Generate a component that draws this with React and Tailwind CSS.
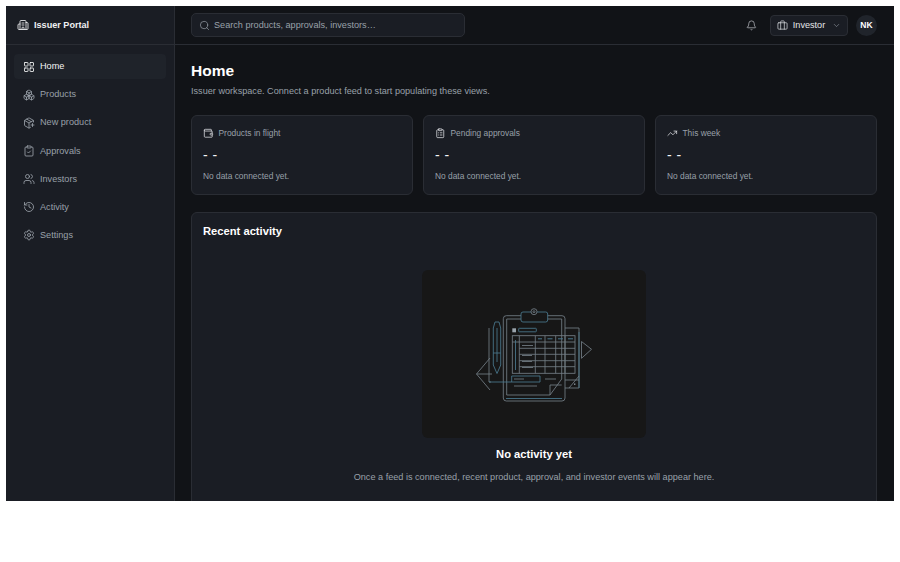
import React from "react";
import { Building2, LayoutGrid, Boxes, PackagePlus, ClipboardCheck, Users, History, Settings, Search, Bell, Briefcase, ChevronDown, Wallet, ClipboardList, TrendingUp } from "lucide-react";

const nav = [
  ["Home", LayoutGrid, true],
  ["Products", Boxes],
  ["New product", PackagePlus],
  ["Approvals", ClipboardCheck],
  ["Investors", Users],
  ["Activity", History],
  ["Settings", Settings],
];

const cards = [
  ["Products in flight", Wallet],
  ["Pending approvals", ClipboardList],
  ["This week", TrendingUp],
];

function Illustration() {
  const g = "#737d85";
  const t = "#4a7a8f";
  const vs = [97.3, 113.3, 123, 133.7, 143];
  const hs = [72, 78.3, 84.3, 90.7, 96.7];
  return (
    <svg viewBox="0 0 224 168" className="w-[224px] h-[168px]" fill="none" strokeWidth="0.85">
      <path d="M67 58V112H69" stroke={g} />
      <path d="M143 58H157V118H143" stroke={g} />
      <path d="M157 62V118" stroke={t} />
      <path d="M68 88L54.5 104L68 120M54.5 104H70" stroke={g} />
      <path d="M159.5 71.5L169.5 79.3L159.5 88.3V71.5" stroke={g} />
      <path d="M143 110H157M147 118L157 106" stroke={g} />
      <rect x="152" y="113.5" width="1.4" height="1.4" fill="#8a949c" />
      <rect x="81.3" y="45.7" width="61.7" height="85.3" rx="3" stroke={g} />
      <path d="M84.7 49H139.7V109L128 125H84.7V49Z" stroke={g} />
      <path d="M128 125V115H139.7" stroke={g} />
      <path d="M84 128.5H140" stroke={t} />
      <rect x="99" y="42" width="26.7" height="10" rx="2" fill="#171717" stroke={t} />
      <circle cx="112" cy="41.7" r="3" fill="#171717" stroke={g} />
      <circle cx="112" cy="41.7" r="1" stroke={g} />
      <rect x="90.3" y="58.3" width="3.7" height="4" fill="#9aa4ac" />
      <rect x="96.7" y="58.3" width="17.6" height="3.5" rx="0.6" stroke={t} />
      <rect x="90.3" y="65.7" width="62.7" height="37.6" stroke={g} />
      {vs.map((x) => (
        <path key={x} d={`M${x} 65.7V103.3`} stroke={g} />
      ))}
      {hs.map((y) => (
        <path key={y} d={`M97.3 ${y}H153`} stroke={g} />
      ))}
      <path d="M90.3 72H97.3" stroke={g} />
      <path d="M100 75.5H111M100 85.5H110M100 91.5H110M100 97.5H111" stroke="#737d85" />
      <path d="M116 68.8H120M125.5 68.8H130.5M136 68.8H141M146 68.8H151" stroke={t} strokeWidth="1" />
      <path d="M93.5 70V100" stroke={t} />
      <path d="M71.3 58L73 52H77L78.7 58V95L75 103.5L71.3 95V58ZM71.3 83H78.7M75 58V92" stroke={t} />
      <path d="M67 112H118V106H89.7V112" stroke={t} />
      <path d="M92 109H102M123 109H134M92 116H115" stroke="#737d85" />
    </svg>
  );
}

export default function App() {
  return (
    <div className="w-[900px] h-[562px] bg-white pt-[6px] pl-[6px] font-['Liberation_Sans',Arial,sans-serif]">
      <div className="w-[888px] h-[495px] overflow-hidden flex bg-[#111317]">
        <aside className="w-[169px] shrink-0 bg-[#1a1d24] border-r border-[#2a2d34]">
          <div className="h-[39px] flex items-center gap-[5px] pl-[11px] border-b border-[#2a2d34] text-[#f0f1f3]">
            <Building2 size={12} strokeWidth={1.7} />
            <span className="text-[9.1px] font-bold pt-[1px]">Issuer Portal</span>
          </div>
          <nav className="px-[8px] pt-[9px] flex flex-col gap-[3.17px]">
            {nav.map(([label, Icon, active]) => (
              <div
                key={label}
                className={`h-[25px] flex items-center gap-[5px] pl-[9px] rounded-[4px] text-[9.14px] ${active ? "bg-[#1f232a] text-[#f4f5f6]" : "text-[#99a0a9]"}`}
              >
                <Icon size={12} strokeWidth={1.7} />
                <span className="pt-[1px]">{label}</span>
              </div>
            ))}
          </nav>
        </aside>
        <div className="flex-1 min-w-0">
          <header className="h-[39px] flex items-center justify-between pl-[16px] pr-[17px] border-b border-[#2a2d34]">
            <div className="w-[274px] h-[24px] flex items-center gap-[4px] pl-[7px] rounded-[5px] bg-[#1a1d24] border border-[#2a2d34] text-[#99a0a9]">
              <Search size={11} strokeWidth={1.5} />
              <span className="text-[9.14px] pt-[1px]">Search products, approvals, investors…</span>
            </div>
            <div className="flex items-center">
              <Bell size={11} strokeWidth={1.5} className="text-[#c4c8cd]" />
              <div className="ml-[13px] w-[78px] h-[21px] flex items-center justify-center gap-[5px] rounded-[4px] bg-[#1a1d24] border border-[#2a2d34] text-[#e4e6e9]">
                <Briefcase size={11} strokeWidth={1.5} />
                <span className="text-[9.14px] pt-[1px]">Investor</span>
                <ChevronDown size={9} strokeWidth={1.5} className="ml-[2px] text-[#99a0a9]" />
              </div>
              <div className="ml-[8px] w-[21px] h-[21px] rounded-full bg-[#20242b] flex items-center justify-center text-[8.5px] font-bold text-white">NK</div>
            </div>
          </header>
          <main className="pl-[16px] pr-[17px] pt-[16px]">
            <h1 className="text-[15.5px] leading-[20px] font-bold text-white">Home</h1>
            <p className="mt-[4px] text-[9.14px] leading-[13px] text-[#99a0a9]">Issuer workspace. Connect a product feed to start populating these views.</p>
            <div className="mt-[17px] grid grid-cols-3 gap-[10px]">
              {cards.map(([label, Icon]) => (
                <div key={label} className="h-[80px] rounded-[6px] bg-[#1a1d24] border border-[#2a2d34] pl-[11px] pt-[11px]">
                  <div className="flex items-center gap-[5px] h-[13px] text-[#99a0a9]">
                    <Icon size={10.5} strokeWidth={1.7} className="text-[#e4e6e9]" />
                    <span className="text-[8.4px]">{label}</span>
                  </div>
                  <div className="mt-[5px] text-[14px] leading-[21px] text-[#f4f5f6] tracking-[0.5px]">- -</div>
                  <div className="mt-[4px] text-[8.4px] leading-[12px] text-[#99a0a9]">No data connected yet.</div>
                </div>
              ))}
            </div>
            <section className="mt-[17px] rounded-[6px] bg-[#1a1d24] border border-[#2a2d34] h-[320px] px-[11px] pt-[11px]">
              <h2 className="text-[11.2px] leading-[15px] font-bold text-white">Recent activity</h2>
              <div className="mt-[31px] flex flex-col items-center">
                <div className="w-[224px] h-[168px] rounded-[6px] bg-[#171717]">
                  <Illustration />
                </div>
                <div className="mt-[8px] text-[11.2px] leading-[16px] font-bold text-white">No activity yet</div>
                <p className="mt-[8px] text-[9.14px] leading-[14px] text-[#99a0a9]">Once a feed is connected, recent product, approval, and investor events will appear here.</p>
              </div>
            </section>
          </main>
        </div>
      </div>
    </div>
  );
}
